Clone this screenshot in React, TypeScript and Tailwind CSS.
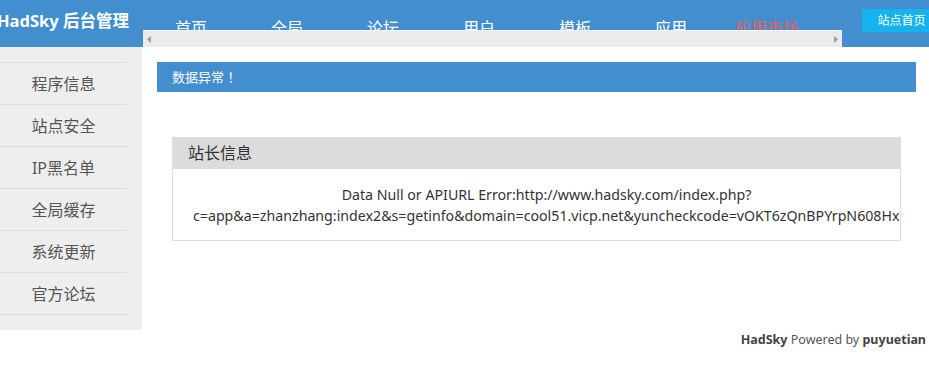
const navItems = ['首页', '全局', '论坛', '用户', '模板', '应用'];
const sideItems = ['程序信息', '站点安全', 'IP黑名单', '全局缓存', '系统更新', '官方论坛'];

export default function App() {
  return (
    <div
      className="w-[929px] h-[374px] overflow-hidden bg-white text-[#333]"
      style={{ fontFamily: '"Noto Sans", "Noto Sans CJK SC", sans-serif' }}
    >
      <header className="h-[47px] bg-[#438ecf] flex">
        <div className="w-[143px] shrink-0 overflow-visible">
          <div className="-ml-[3px] mt-[10px] text-white text-[16.5px] font-bold leading-[22px] whitespace-nowrap">
            HadSky 后台管理
          </div>
        </div>
        <div className="w-[699px] shrink-0 flex flex-col">
          <div className="h-[30px] overflow-hidden flex pt-[17px]">
            {navItems.map((n) => (
              <div key={n} className="w-[96px] shrink-0 text-center text-white text-[16px] leading-[22px]">
                {n}
              </div>
            ))}
            <div className="w-[96px] shrink-0 text-center text-[#e8605c] text-[16px] leading-[22px] whitespace-nowrap">应用市场</div>
          </div>
          <div className="h-[17px] bg-[#ebebeb] border-t border-[#f6f6f6] flex items-center justify-between px-[4px]">
            <svg width="4" height="7" viewBox="0 0 4 7"><path d="M4 0 L0 3.5 L4 7 Z" fill="#9a9a9a" /></svg>
            <svg width="4" height="7" viewBox="0 0 4 7"><path d="M0 0 L4 3.5 L0 7 Z" fill="#9a9a9a" /></svg>
          </div>
        </div>
        <div className="ml-[20px] pt-[9px] shrink-0">
          <div className="w-[79px] h-[23px] bg-[#17b3ee] text-white text-[12px] leading-[23px] text-center whitespace-nowrap">
            站点首页
          </div>
        </div>
      </header>

      <div className="flex">
        <aside className="w-[142px] shrink-0 bg-[#eeeeee] pt-[15px] pb-[15px]">
          <div className="w-[127px] border-t border-[#dcdcdc]">
            {sideItems.map((s) => (
              <div key={s} className="h-[42px] border-b border-[#dcdcdc] flex items-center justify-center text-[16px] text-[#555]">
                {s}
              </div>
            ))}
          </div>
        </aside>

        <main className="flex-1 min-w-0 pt-[15px] pl-[15px] pr-[13px]">
          <div className="h-[30px] bg-[#438ecf] text-white text-[13px] leading-[30px] pl-[15px]">数据异常 ！</div>
          <div className="mx-[15px] mt-[45px] border border-[#dddddd]">
            <div className="h-[31px] bg-[#dcdcdc] pl-[15px] text-[16px] leading-[31px] text-[#333]">站长信息</div>
            <div className="overflow-hidden pt-[15px] pb-[14px] pl-[20px] text-center text-[14.2px] leading-[21px] text-[#333]">
              Data Null or APIURL Error:http://www.hadsky.com/index.php?
              c=app&amp;a=zhanzhang:index2&amp;s=getinfo&amp;domain=cool51.vicp.net&amp;yuncheckcode=vOKT6zQnBPYrpN608HxKJ2dlsQ
            </div>
          </div>
        </main>
      </div>

      <footer className="h-[20px] text-right pr-[3px] text-[12.5px] leading-[20px] text-[#555]">
        <b className="text-[#444]">HadSky</b> Powered by <b className="text-[#444]">puyuetian</b>
      </footer>
    </div>
  );
}
